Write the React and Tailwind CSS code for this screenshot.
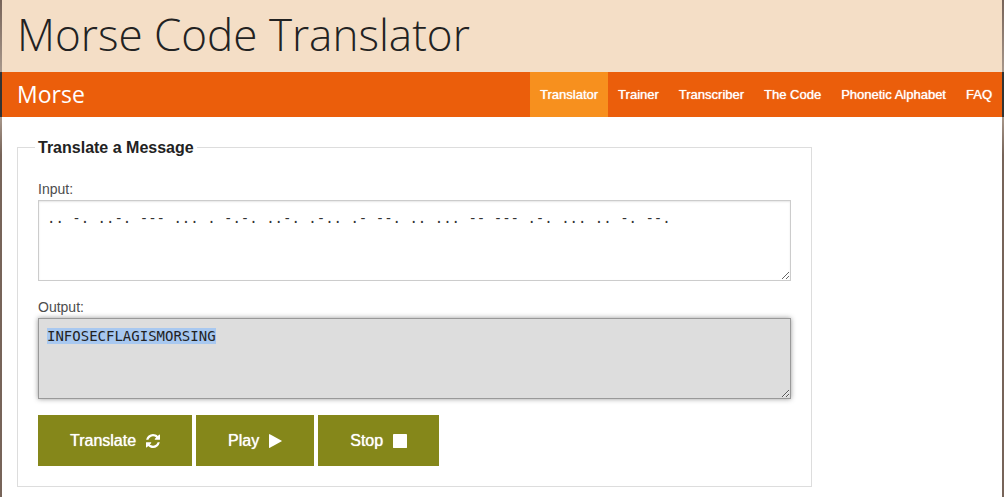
import { useEffect, useRef, useState } from 'react';

const navLinks = ['Translator', 'Trainer', 'Transcriber', 'The Code', 'Phonetic Alphabet', 'FAQ'];

const codes = {
    '.-': 'A', '-...': 'B', '-.-.': 'C', '-..': 'D', '.': 'E', '..-.': 'F', '--.': 'G',
    '....': 'H', '..': 'I', '.---': 'J', '-.-': 'K', '.-..': 'L', '--': 'M', '-.': 'N',
    '---': 'O', '.--.': 'P', '--.-': 'Q', '.-.': 'R', '...': 'S', '-': 'T', '..-': 'U',
    '...-': 'V', '.--': 'W', '-..-': 'X', '-.--': 'Y', '--..': 'Z',
};

const decode = (text) => text.trim().split(/\s+/).map(c => codes[c] || '').join('');

function RefreshIcon() {
    return (
        <svg viewBox="128 128 1536 1536" className="size-[14px] fill-current" aria-hidden="true">
            <path d="M1639 1056q0 5-1 7-64 268-268 434.5t-478 166.5q-146 0-282.5-55t-243.5-157l-129 129q-19 19-45 19t-45-19-19-45v-448q0-26 19-45t45-19h448q26 0 45 19t19 45-19 45l-137 137q71 66 161 102t187 36q134 0 250-65t186-179q11-17 53-117 8-23 30-23h192q13 0 22.5 9.5t9.5 22.5zm25-800v448q0 26-19 45t-45 19h-448q-26 0-45-19t-19-45 19-45l138-138q-148-137-349-137-134 0-250 65t-186 179q-11 17-53 117-8 23-30 23h-199q-13 0-22.5-9.5t-9.5-22.5v-7q65-268 270-434.5t480-166.5q146 0 284 55.5t245 156.5l130-129q19-19 45-19t45 19 19 45z" />
        </svg>
    );
}

function PlayIcon() {
    return (
        <svg viewBox="0 0 13 14" className="h-[14px] w-[13px] fill-current" aria-hidden="true">
            <path d="M0 .4Q0 0 .4 .1L12.7 6.8Q13 7 12.7 7.2L.4 13.9Q0 14 0 13.6Z" />
        </svg>
    );
}

function StopIcon() {
    return (
        <svg viewBox="0 0 14 14" className="size-[14px] fill-current" aria-hidden="true">
            <rect width="14" height="14" rx="0.4" />
        </svg>
    );
}

function ActionButton({ label, icon, onClick }) {
    return (
        <button
            type="button"
            onClick={onClick}
            className="flex h-[51px] items-center gap-[10px] bg-[#85871a] px-8 text-base text-white [text-shadow:0_0_1px_white] hover:bg-[#6b6c15]"
        >
            {label}
            {icon}
        </button>
    );
}

export default function App() {
    const [input, setInput] = useState('.. -. ..-. --- ... . -.-. ..-. .-.. .- --. .. ... -- --- .-. ... .. -. --.');
    const [output, setOutput] = useState(decode(input));
    const outputRef = useRef(null);

    // keep the result selected so it can be copied straight away
    useEffect(() => {
        outputRef.current.focus();
        outputRef.current.select();
    }, [output]);

    return (
        <div className="flex min-h-screen flex-col bg-[#776459] font-['Liberation_Sans',Arial,sans-serif] text-[#222]">
            <header className="bg-linear-to-b from-[#776459] to-[#a8988c] px-[2px]">
                <h1 className="bg-[#f4dec6] px-[15px] pt-1 pb-2 font-['Open_Sans',sans-serif] text-[44px] leading-[60px] font-light">
                    Morse Code Translator
                </h1>
            </header>

            <div className="bg-[#333] px-[2px]">
                <nav className="flex h-[45px] items-stretch justify-between bg-[#eb5e0b] pl-[15px] text-white">
                    <a href="#" className="font-['Open_Sans',sans-serif] text-[23px] leading-[45px]">Morse</a>
                    <ul className="flex">
                        {navLinks.map((link, i) => (
                            <li key={link}>
                                <a
                                    href="#"
                                    className={`block px-[10px] text-[13px] leading-[45px] whitespace-nowrap [text-shadow:0_0_1px_white] ${i === 0 ? 'bg-[#f7901e]' : ''}`}
                                >
                                    {link}
                                </a>
                            </li>
                        ))}
                    </ul>
                </nav>
            </div>

            <div className="flex grow flex-col bg-linear-to-b from-[#a8988c] to-[#776459] to-10% px-[2px]">
                <main className="grow bg-white px-[15px] pt-5">
                    <form className="w-[82%]" onSubmit={e => e.preventDefault()}>
                        <fieldset className="border border-[#ddd] px-5 pb-5">
                            <legend className="-ml-[3px] bg-white px-[3px] text-base leading-[21px] font-bold">Translate a Message</legend>

                            <label htmlFor="input" className="mt-5 block text-sm leading-[22px] text-[#4d4d4d]">Input:</label>
                            <textarea
                                id="input"
                                value={input}
                                onChange={e => setInput(e.target.value)}
                                className="block h-[81px] w-full border border-[#ccc] bg-white px-2 py-[10px] font-['DejaVu_Sans_Mono',monospace] text-sm leading-[15px] text-[#333] shadow-[inset_0_1px_2px_rgba(0,0,0,0.1)] outline-none"
                            />

                            <label htmlFor="output" className="mt-[15px] block text-sm leading-[22px] text-[#4d4d4d]">Output:</label>
                            <textarea
                                id="output"
                                ref={outputRef}
                                value={output}
                                readOnly
                                className="block h-[81px] w-full border border-[#999] bg-[#ddd] px-2 py-[10px] font-['DejaVu_Sans_Mono',monospace] text-sm leading-[15px] text-[#333] shadow-[0_0_5px_#999] outline-none selection:bg-[#a8c8f0] selection:text-[#222]"
                            />

                            <div className="mt-4 flex gap-1">
                                <ActionButton label="Translate" icon={<RefreshIcon />} onClick={() => setOutput(decode(input))} />
                                <ActionButton label="Play" icon={<PlayIcon />} />
                                <ActionButton label="Stop" icon={<StopIcon />} />
                            </div>
                        </fieldset>
                    </form>
                </main>
            </div>
        </div>
    );
}
